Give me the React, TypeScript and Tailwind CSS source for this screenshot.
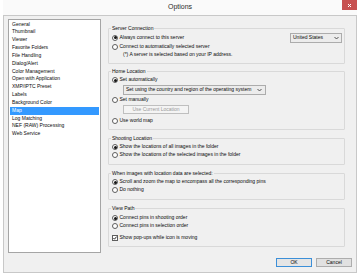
import React from "react";

const listItems = [
  "General",
  "Thumbnail",
  "Viewer",
  "Favorite Folders",
  "File Handling",
  "Dialog/Alert",
  "Color Management",
  "Open with Application",
  "XMP/IPTC Preset",
  "Labels",
  "Background Color",
  "Map",
  "Log Matching",
  "NEF (RAW) Processing",
  "Web Service",
];

function Radio({ checked }: { checked?: boolean }) {
  return (
    <span className="w-[6px] h-[6px] rounded-full border border-[#5e5e5e] bg-white flex items-center justify-center shrink-0">
      {checked && <span className="w-[3px] h-[3px] rounded-full bg-[#141414]" />}
    </span>
  );
}

function RadioRow({ checked, label, className = "" }: { checked?: boolean; label: string; className?: string }) {
  return (
    <div className={"flex items-center h-[8px] gap-[1.5px] " + className}>
      <Radio checked={checked} />
      <span className="whitespace-nowrap">{label}</span>
    </div>
  );
}

function Chevron() {
  return (
    <svg width="5" height="4" viewBox="0 0 5 4" className="shrink-0">
      <polyline points="0.5,1 2.5,3 4.5,1" fill="none" stroke="#444" strokeWidth="0.9" />
    </svg>
  );
}

function Group({ title, children, className = "" }: { title: string; children: React.ReactNode; className?: string }) {
  return (
    <fieldset className={"border border-[#d9d9d9] rounded-[1px] pl-[3px] pr-[2px] " + className}>
      <legend className="px-[1px] -ml-[1px] leading-[6px] h-[6px] whitespace-nowrap">{title}</legend>
      {children}
    </fieldset>
  );
}

export default function App() {
  return (
    <div
      className="w-[360px] h-[275px] bg-white text-[5px] text-[#0a0a0a] overflow-hidden"
      style={{ fontFamily: '"Liberation Sans", Arial, sans-serif' }}
    >
      <div className="ml-[3px] w-[354px] flex flex-col">
        {/* Title bar */}
        <div className="h-[15px] bg-[#fafafa] relative flex items-center justify-center">
          <span className="text-[7px] text-[#2b2b2b] -mt-[1px]">Options</span>
          <div className="absolute right-0 top-0 w-[15px] h-[10px] bg-[#c75050] flex items-center justify-center">
            <svg width="5" height="5" viewBox="0 0 5 5">
              <path d="M1 1 L4 4 M4 1 L1 4" stroke="#fff" strokeWidth="1" />
            </svg>
          </div>
        </div>

        {/* Content */}
        <div className="h-[258px] border border-[#c8c8c8] bg-[#f0f0f0] flex flex-col pt-[3px] pl-[4px]">
          <div className="flex gap-[7px]">
            {/* List */}
            <div className="w-[93px] h-[234px] border border-[#a5a5a5] bg-white p-[1px] pt-[0.5px]">
              {listItems.map((it) => (
                <div
                  key={it}
                  className={
                    "h-[7.85px] leading-[7.85px] pl-[2px] whitespace-nowrap " +
                    (it === "Map" ? "bg-[#3399ff] text-white" : "")
                  }
                >
                  {it}
                </div>
              ))}
            </div>

            {/* Groups */}
            <div className="w-[237px] flex flex-col pt-[6px]">
              <Group title="Server Connection" className="pb-[6.5px]">
                <div className="flex items-center justify-between h-[10px] mt-[1.5px]">
                  <RadioRow checked label="Always connect to this server" />
                  <div className="w-[52px] h-[10px] border border-[#acacac] bg-[#ececec] flex items-center justify-between pl-[2px] pr-[2px]">
                    <span>United States</span>
                    <Chevron />
                  </div>
                </div>
                <RadioRow label="Connect to automatically selected server" />
                <div className="h-[6px] leading-[6px] pl-[11px] whitespace-nowrap">
                  (*) A server is selected based on your IP address.
                </div>
              </Group>

              <Group title="Home Location" className="pb-[4px] mt-[4px]">
                <RadioRow checked label="Set automatically" className="mt-[2px]" />
                <div className="ml-[11px] mt-[1px] w-[143px] h-[10px] border border-[#acacac] bg-[#ececec] flex items-center justify-between pl-[2px] pr-[3px]">
                  <span className="whitespace-nowrap">Set using the country and region of the operating system</span>
                  <Chevron />
                </div>
                <RadioRow label="Set manually" className="mt-[1px]" />
                <div className="ml-[11px] mt-[1px] w-[66px] h-[9px] border border-[#bfbfbf] bg-[#f4f4f4] text-[#9a9a9a] flex items-center justify-center whitespace-nowrap">
                  Use Current Location
                </div>
                <RadioRow label="Use world map" className="mt-[3px]" />
              </Group>

              <Group title="Shooting Location" className="pb-[5px] mt-[5px]">
                <RadioRow checked label="Show the locations of all images in the folder" className="mt-[2px]" />
                <RadioRow label="Show the locations of the selected images in the folder" />
              </Group>

              <Group title="When images with location data are selected:" className="pb-[5px] mt-[5px]">
                <RadioRow checked label="Scroll and zoom the map to encompass all the corresponding pins" className="mt-[2px]" />
                <RadioRow label="Do nothing" />
              </Group>

              <Group title="View Path" className="pb-[4px] mt-[5px]">
                <RadioRow checked label="Connect pins in shooting order" className="mt-[3px]" />
                <RadioRow label="Connect pins in selection order" />
                <div className="flex items-center h-[8px] gap-[1.5px] mt-[4px]">
                  <span className="w-[6px] h-[6px] border border-[#5e5e5e] bg-white flex items-center justify-center shrink-0">
                    <svg width="4" height="4" viewBox="0 0 4 4">
                      <polyline points="0.4,2 1.5,3.2 3.6,0.6" fill="none" stroke="#141414" strokeWidth="0.9" />
                    </svg>
                  </span>
                  <span className="whitespace-nowrap">Show pop-ups while icon is moving</span>
                </div>
              </Group>
            </div>
          </div>

          {/* Buttons */}
          <div className="flex justify-end gap-[4px] pr-[4px] mt-[5px]">
            <div className="w-[36px] h-[9px] border border-[#3c8fd8] bg-[#e5e5e5] flex items-center justify-center">
              OK
            </div>
            <div className="w-[36px] h-[9px] border border-[#adadad] bg-[#e1e1e1] flex items-center justify-center">
              Cancel
            </div>
          </div>
        </div>
      </div>
    </div>
  );
}
